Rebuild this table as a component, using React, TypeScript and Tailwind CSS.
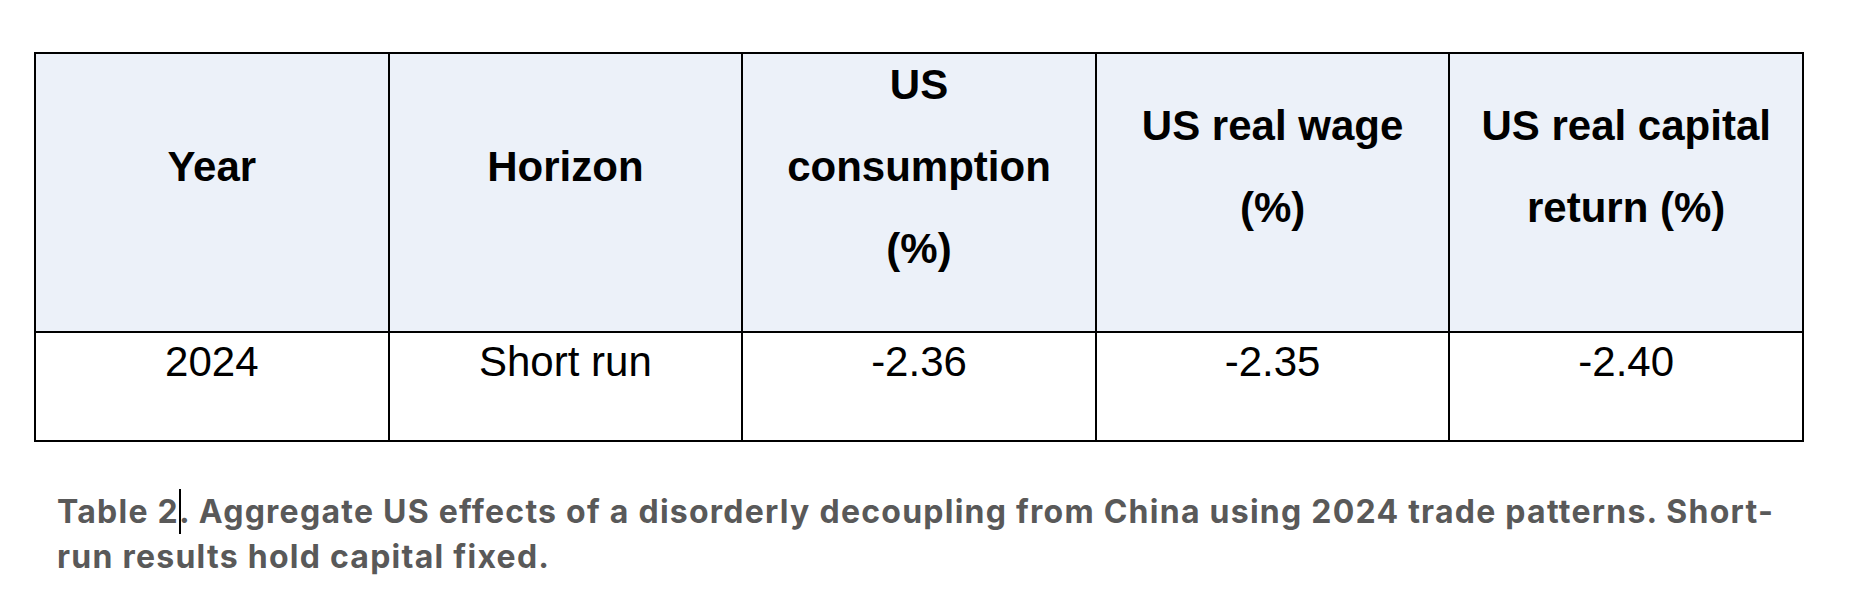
import React from "react";

const headers: string[][] = [
  ["Year"],
  ["Horizon"],
  ["US", "consumption", "(%)"],
  ["US real wage", "(%)"],
  ["US real capital", "return (%)"],
];

const row = ["2024", "Short run", "-2.36", "-2.35", "-2.40"];

export default function App() {
  return (
    <div className="w-[1850px] h-[594px] bg-white overflow-hidden text-black" style={{ fontFamily: '"Liberation Sans", Arial, sans-serif' }}>
      <div className="ml-[34px] mt-[52px] w-[1770px] border-l-2 border-t-2 border-black grid grid-cols-5">
        {headers.map((lines, i) => (
          <div
            key={"h" + i}
            className="h-[279px] bg-[#ecf1f9] border-r-2 border-b-2 border-black flex flex-col items-center justify-center pb-[52px] text-[42px] leading-[82px] font-bold text-center"
          >
            {lines.map((l, j) => (
              <div key={j} className="whitespace-nowrap">{l}</div>
            ))}
          </div>
        ))}
        {row.map((v, i) => (
          <div
            key={"r" + i}
            className="h-[109px] border-r-2 border-b-2 border-black flex justify-center pt-[5px] text-[42px] leading-[48px] text-center"
          >
            <span className="whitespace-nowrap">{v}</span>
          </div>
        ))}
      </div>
      <div
        className="ml-[57px] mt-[47px] text-[32px] leading-[45px] font-bold tracking-[1.25px] text-[#595959]"
        style={{ fontFamily: 'Inter, "Liberation Sans", sans-serif' }}
      >
        <div className="whitespace-nowrap">
          Table 2<span className="inline-block w-[2px] h-[45px] bg-black align-top -mr-[2px]"></span>. Aggregate US effects of a disorderly decoupling from China using 2024 trade patterns. Short-
        </div>
        <div className="whitespace-nowrap">run results hold capital fixed.</div>
      </div>
    </div>
  );
}
